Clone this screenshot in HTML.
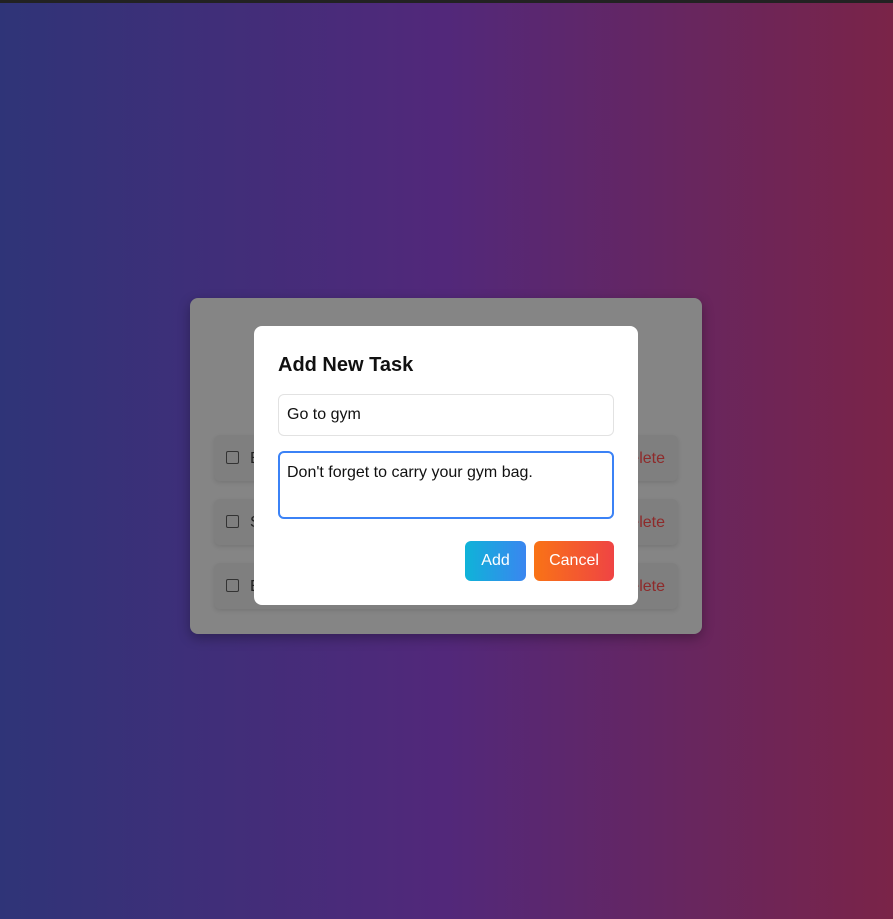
<!DOCTYPE html>
<html><head><style>
html,body{margin:0;padding:0}
body{width:893px;height:919px;position:relative;overflow:hidden;background:linear-gradient(90deg,#2f3478 0%,#52287a 50%,#7a2448 100%);font-family:"Liberation Sans","DejaVu Sans",sans-serif}
.top{position:absolute;left:0;top:0;width:893px;height:3px;background:#222}
.card{position:absolute;left:190px;top:298px;width:512px;height:336px;background:#858585;border-radius:8px;box-shadow:0 4px 12px rgba(0,0,0,.3)}
.item{position:absolute;left:24px;width:464px;height:46px;background:#7f7f7f;border-radius:6px;box-shadow:0 2px 4px rgba(0,0,0,.1)}
.cb{position:absolute;left:12px;top:16px;width:11px;height:11px;border:1px solid #333;border-radius:2px}
.t{position:absolute;left:36px;top:15px;color:#222;font-size:16px}
.del{position:absolute;right:13px;top:15px;color:#8e2a2a;font-size:16px}
.modal{position:absolute;left:254px;top:326px;width:384px;height:279px;background:#fff;border-radius:8px}
h2{position:absolute;left:24px;top:28px;margin:0;font-size:20px;font-weight:bold;color:#111}
.in{position:absolute;left:24px;top:68px;border:1px solid #e2e2e2;border-radius:6px;font-size:16px;color:#111;line-height:40px;padding-left:8px;box-sizing:border-box;width:336px;height:42px}
.ta{position:absolute;left:24px;top:125px;width:336px;height:68px;border:2px solid #3b82f6;border-radius:6px;box-sizing:border-box;font-size:16px;color:#111;padding:11px 7px}
.btn{position:absolute;top:215px;height:40px;border-radius:6px;color:#fff;font-size:16px;text-align:center;line-height:40px}
</style></head><body>
<div class="top"></div>
<div class="card">
<div class="item" style="top:137px"><div class="cb"></div><div class="t">Buy</div><div class="del">Delete</div></div>
<div class="item" style="top:201px"><div class="cb"></div><div class="t">Study</div><div class="del">Delete</div></div>
<div class="item" style="top:265px"><div class="cb"></div><div class="t">Exercise</div><div class="del">Delete</div></div>
</div>
<div class="modal">
<h2>Add New Task</h2>
<div class="in">Go to gym</div>
<div class="ta">Don't forget to carry your gym bag.</div>
<div class="btn" style="left:211px;width:61px;background:linear-gradient(90deg,#0fb3d8,#3a86f0)">Add</div>
<div class="btn" style="left:280px;width:80px;background:linear-gradient(90deg,#f97316,#ef4444)">Cancel</div>
</div>
</body></html>
